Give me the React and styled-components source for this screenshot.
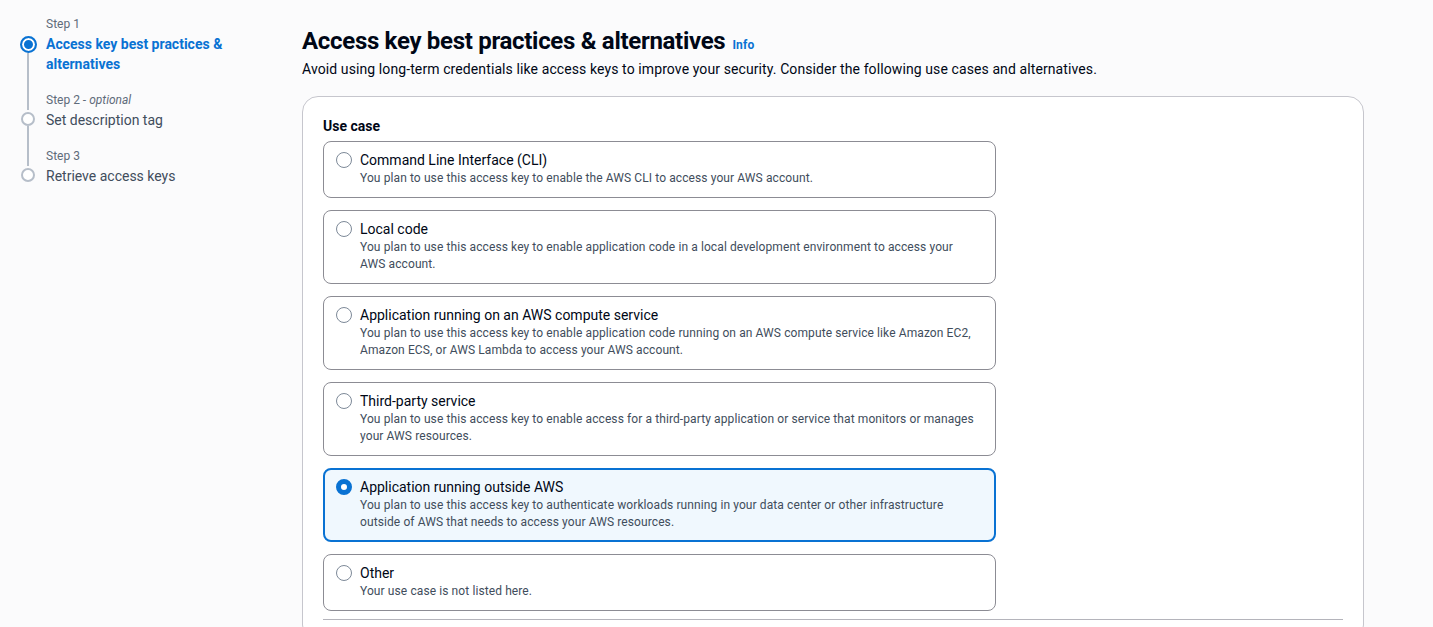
import React from 'react'
import styled, {createGlobalStyle} from 'styled-components'

const GlobalStyle = createGlobalStyle`
  body {
    margin: 0;
    background: #fbfbfc;
    font-family: Roboto, "Liberation Sans", sans-serif;
    color: #000716;
  }
`

const Page = styled.div`
  display: grid;
  grid-template-columns: 302px 1062px;
  min-height: 627px;
`

const Steps = styled.nav`
  padding: 16px 0 0 20px;
`

const Step = styled.div`
  display: grid;
  grid-template-columns: 16px 1fr;
  column-gap: 10px;
`

const Rail = styled.div`
  display: flex;
  flex-direction: column;
  align-items: center;
`

const Line = styled.div`
  width: 2px;
  flex: ${p => (p.$fixed ? 'none' : 1)};
  height: ${p => (p.$fixed ? '18px' : 'auto')};
  background: ${p => (p.$hidden ? 'transparent' : '#b6bec9')};
`

const Dot = styled.div`
  box-sizing: border-box;
  margin-top: 2px;
  width: ${p => (p.$active ? 17 : 14)}px;
  height: ${p => (p.$active ? 17 : 14)}px;
  border-radius: 50%;
  flex: none;
  background: #fff;
  border: ${p => (p.$active ? '2px solid #0972d3' : '2px solid #b6bec9')};
  box-shadow: ${p => (p.$active ? 'inset 0 0 0 2px #fff, inset 0 0 0 8px #0972d3' : 'none')};
`

const StepLabel = styled.div`
  font-size: 12px;
  line-height: 16px;
  color: #5f6b7a;
  margin-bottom: 2px;
  em {
    font-style: italic;
  }
`

const StepTitle = styled.div`
  font-size: 14px;
  line-height: 20px;
  padding-bottom: 18px;
  font-weight: ${p => (p.$active ? 700 : 400)};
  color: ${p => (p.$active ? '#0972d3' : '#414d5c')};
  max-width: 190px;
`

const Main = styled.main`
  padding-top: 26px;
`

const Heading = styled.h1`
  display: flex;
  align-items: baseline;
  gap: 7px;
  margin: 0;
  font-size: 24px;
  line-height: 30px;
  font-weight: 700;
  letter-spacing: -0.3px;
`

const Info = styled.a`
  font-size: 12px;
  line-height: 16px;
  font-weight: 700;
  color: #0972d3;
  letter-spacing: 0.2px;
`

const Lead = styled.p`
  margin: 3px 0 0;
  font-size: 14px;
  line-height: 20px;
  letter-spacing: 0.1px;
`

const Container = styled.section`
  margin-top: 17px;
  background: #fff;
  border: 1px solid #c6c6cd;
  border-radius: 16px;
  padding: 19px 20px 0;
`

const Label = styled.div`
  font-size: 14px;
  line-height: 20px;
  font-weight: 700;
  margin-bottom: 5px;
`

const Tiles = styled.div`
  display: flex;
  flex-direction: column;
  gap: 12px;
  max-width: 673px;
`

const Tile = styled.label`
  display: grid;
  grid-template-columns: 16px 1fr;
  column-gap: 8px;
  border-radius: 8px;
  padding: ${p => (p.$selected ? '7px 14px 9px 11px' : '8px 15px 10px 12px')};
  border: ${p => (p.$selected ? '2px solid #0972d3' : '1px solid #8c8c94')};
  background: ${p => (p.$selected ? '#f0f8fe' : '#fff')};
`

const Radio = styled.span`
  box-sizing: border-box;
  margin-top: 2px;
  width: 16px;
  height: 16px;
  border-radius: 50%;
  background: #fff;
  border: ${p => (p.$checked ? '5px solid #0972d3' : '1.5px solid #7d8998')};
`

const TileTitle = styled.div`
  font-size: 14px;
  line-height: 20px;
`

const TileText = styled.div`
  grid-column: 2;
  font-size: 12px;
  line-height: 17px;
  letter-spacing: 0.1px;
  color: #414d5c;
`

const Divider = styled.div`
  margin-top: 8px;
  border-top: 1px solid #b4b4bb;
  height: 20px;
`

const steps = [
  {label: 'Step 1', title: 'Access key best practices & alternatives', active: true},
  {label: 'Step 2', optional: true, title: 'Set description tag'},
  {label: 'Step 3', title: 'Retrieve access keys'},
]

const useCases = [
  {
    title: 'Command Line Interface (CLI)',
    text: 'You plan to use this access key to enable the AWS CLI to access your AWS account.',
  },
  {
    title: 'Local code',
    text: 'You plan to use this access key to enable application code in a local development environment to access your AWS account.',
  },
  {
    title: 'Application running on an AWS compute service',
    text: 'You plan to use this access key to enable application code running on an AWS compute service like Amazon EC2, Amazon ECS, or AWS Lambda to access your AWS account.',
  },
  {
    title: 'Third-party service',
    text: 'You plan to use this access key to enable access for a third-party application or service that monitors or manages your AWS resources.',
  },
  {
    title: 'Application running outside AWS',
    text: 'You plan to use this access key to authenticate workloads running in your data center or other infrastructure outside of AWS that needs to access your AWS resources.',
    selected: true,
  },
  {
    title: 'Other',
    text: 'Your use case is not listed here.',
  },
]

export default function App() {
  return (
    <>
      <GlobalStyle />
      <Page>
        <Steps>
          {steps.map((s, i) => (
            <Step key={s.label}>
              <Rail>
                <Line $fixed $hidden={i === 0} />
              </Rail>
              <StepLabel>
                {s.label}
                {s.optional && (
                  <>
                    {' - '}
                    <em>optional</em>
                  </>
                )}
              </StepLabel>
              <Rail>
                <Dot $active={s.active} />
                <Line $hidden={i === steps.length - 1} />
              </Rail>
              <StepTitle $active={s.active}>{s.title}</StepTitle>
            </Step>
          ))}
        </Steps>
        <Main>
          <Heading>
            Access key best practices &amp; alternatives
            <Info>Info</Info>
          </Heading>
          <Lead>
            Avoid using long-term credentials like access keys to improve your security. Consider the following use cases and alternatives.
          </Lead>
          <Container>
            <Label>Use case</Label>
            <Tiles>
              {useCases.map(u => (
                <Tile key={u.title} $selected={u.selected}>
                  <Radio $checked={u.selected} />
                  <TileTitle>{u.title}</TileTitle>
                  <TileText>{u.text}</TileText>
                </Tile>
              ))}
            </Tiles>
            <Divider />
          </Container>
        </Main>
      </Page>
    </>
  )
}
